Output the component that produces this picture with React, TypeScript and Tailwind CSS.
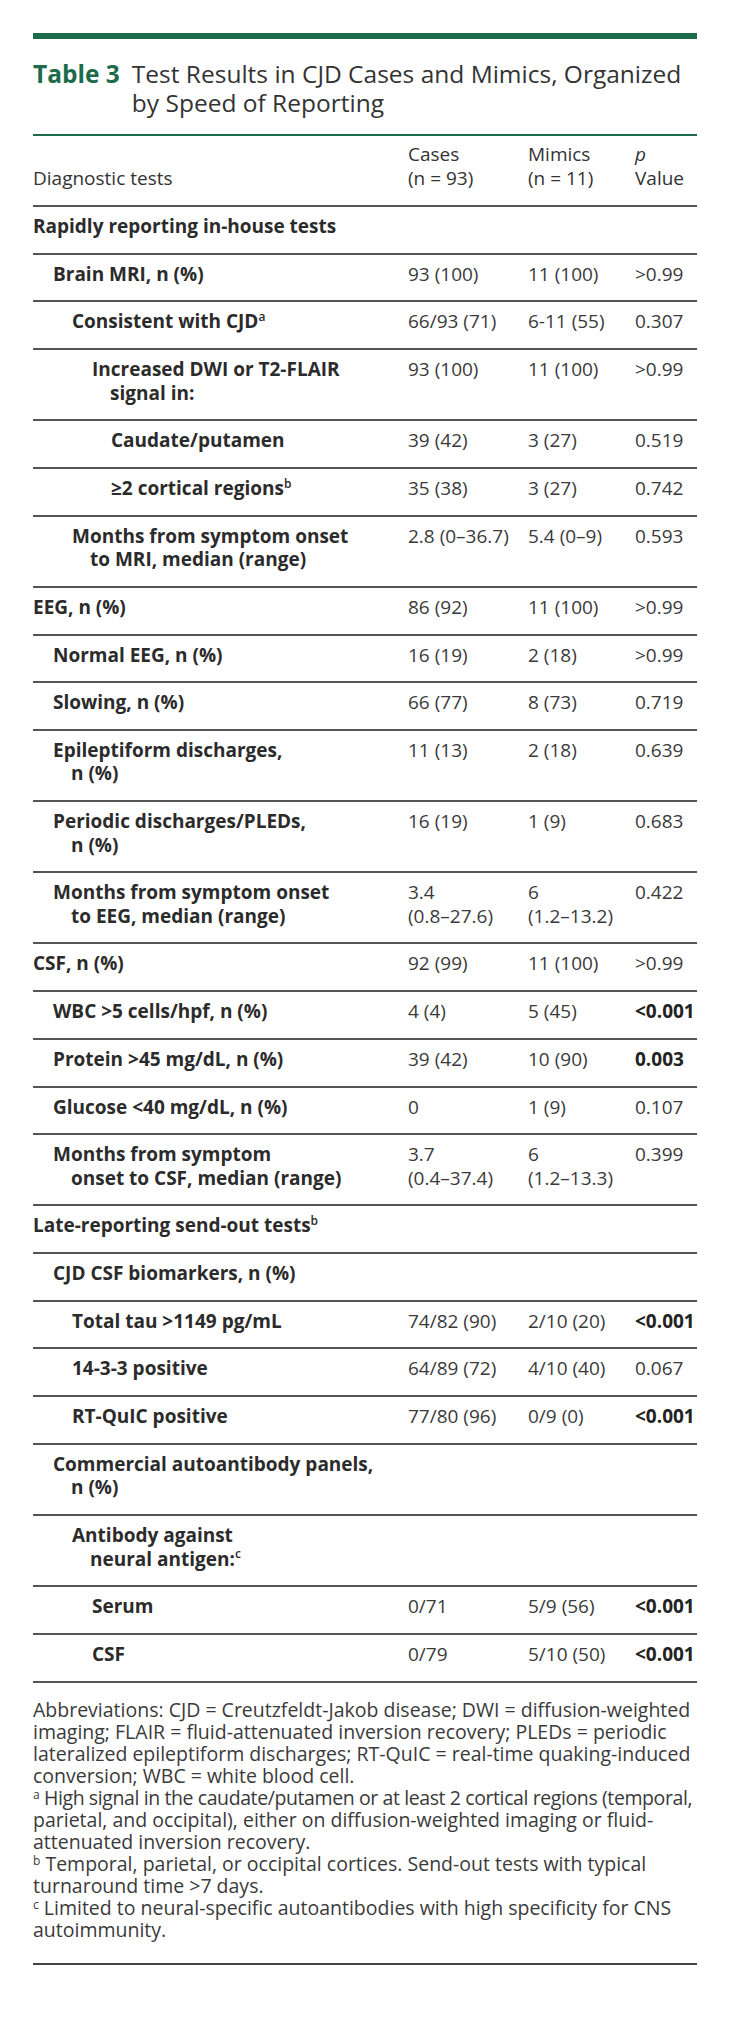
import React from "react";

type Row = {
  label: React.ReactNode[];
  level: number;
  cases?: string[];
  mimics?: string[];
  p?: string;
  bold?: boolean;
};

const sup = (t: string) => <sup className="text-[12px] font-semibold -top-[0.6em]">{t}</sup>;

const rows: Row[] = [
  { label: ["Rapidly reporting in-house tests"], level: 0 },
  { label: ["Brain MRI, n (%)"], level: 1, cases: ["93 (100)"], mimics: ["11 (100)"], p: ">0.99" },
  { label: [<>Consistent with CJD{sup("a")}</>], level: 2, cases: ["66/93 (71)"], mimics: ["6-11 (55)"], p: "0.307" },
  { label: ["Increased DWI or T2-FLAIR", "signal in:"], level: 3, cases: ["93 (100)"], mimics: ["11 (100)"], p: ">0.99" },
  { label: ["Caudate/putamen"], level: 4, cases: ["39 (42)"], mimics: ["3 (27)"], p: "0.519" },
  { label: [<>≥2 cortical regions{sup("b")}</>], level: 4, cases: ["35 (38)"], mimics: ["3 (27)"], p: "0.742" },
  { label: ["Months from symptom onset", "to MRI, median (range)"], level: 2, cases: ["2.8 (0–36.7)"], mimics: ["5.4 (0–9)"], p: "0.593" },
  { label: ["EEG, n (%)"], level: 0, cases: ["86 (92)"], mimics: ["11 (100)"], p: ">0.99" },
  { label: ["Normal EEG, n (%)"], level: 1, cases: ["16 (19)"], mimics: ["2 (18)"], p: ">0.99" },
  { label: ["Slowing, n (%)"], level: 1, cases: ["66 (77)"], mimics: ["8 (73)"], p: "0.719" },
  { label: ["Epileptiform discharges,", "n (%)"], level: 1, cases: ["11 (13)"], mimics: ["2 (18)"], p: "0.639" },
  { label: ["Periodic discharges/PLEDs,", "n (%)"], level: 1, cases: ["16 (19)"], mimics: ["1 (9)"], p: "0.683" },
  { label: ["Months from symptom onset", "to EEG, median (range)"], level: 1, cases: ["3.4", "(0.8–27.6)"], mimics: ["6", "(1.2–13.2)"], p: "0.422" },
  { label: ["CSF, n (%)"], level: 0, cases: ["92 (99)"], mimics: ["11 (100)"], p: ">0.99" },
  { label: ["WBC >5 cells/hpf, n (%)"], level: 1, cases: ["4 (4)"], mimics: ["5 (45)"], p: "<0.001", bold: true },
  { label: ["Protein >45 mg/dL, n (%)"], level: 1, cases: ["39 (42)"], mimics: ["10 (90)"], p: "0.003", bold: true },
  { label: ["Glucose <40 mg/dL, n (%)"], level: 1, cases: ["0"], mimics: ["1 (9)"], p: "0.107" },
  { label: ["Months from symptom", "onset to CSF, median (range)"], level: 1, cases: ["3.7", "(0.4–37.4)"], mimics: ["6", "(1.2–13.3)"], p: "0.399" },
  { label: [<>Late-reporting send-out tests{sup("b")}</>], level: 0 },
  { label: ["CJD CSF biomarkers, n (%)"], level: 1 },
  { label: ["Total tau >1149 pg/mL"], level: 2, cases: ["74/82 (90)"], mimics: ["2/10 (20)"], p: "<0.001", bold: true },
  { label: ["14-3-3 positive"], level: 2, cases: ["64/89 (72)"], mimics: ["4/10 (40)"], p: "0.067" },
  { label: ["RT-QuIC positive"], level: 2, cases: ["77/80 (96)"], mimics: ["0/9 (0)"], p: "<0.001", bold: true },
  { label: ["Commercial autoantibody panels,", "n (%)"], level: 1 },
  { label: ["Antibody against", <>neural antigen:{sup("c")}</>], level: 2 },
  { label: ["Serum"], level: 3, cases: ["0/71"], mimics: ["5/9 (56)"], p: "<0.001", bold: true },
  { label: ["CSF"], level: 3, cases: ["0/79"], mimics: ["5/10 (50)"], p: "<0.001", bold: true },
];

const indents = ["pl-0", "pl-[20px]", "pl-[39px]", "pl-[59px]", "pl-[78px]"];

const footnotes: React.ReactNode[] = [
  "Abbreviations: CJD = Creutzfeldt-Jakob disease; DWI = diffusion-weighted",
  "imaging; FLAIR = fluid-attenuated inversion recovery; PLEDs = periodic",
  "lateralized epileptiform discharges; RT-QuIC = real-time quaking-induced",
  "conversion; WBC = white blood cell.",
  <span className="tracking-[-0.4px]"><sup className="text-[12px]">a</sup> High signal in the caudate/putamen or at least 2 cortical regions (temporal,</span>,
  "parietal, and occipital), either on diffusion-weighted imaging or fluid-",
  "attenuated inversion recovery.",
  <><sup className="text-[12px]">b</sup> Temporal, parietal, or occipital cortices. Send-out tests with typical</>,
  "turnaround time >7 days.",
  <><sup className="text-[12px]">c</sup> Limited to neural-specific autoantibodies with high specificity for CNS</>,
  "autoimmunity.",
];

export default function App() {
  return (
    <div className="min-h-[2020px] bg-white px-[33px] pt-[33px] text-[#333] font-['Open_Sans',sans-serif]">
      <div className="h-[6px] bg-[#1c6b4b]" />

      <div className="mt-[20px] flex gap-[12px] text-[24.5px] leading-[29px]">
        <div className="font-bold text-[#1c6b4b] whitespace-nowrap">Table 3</div>
        <div className="text-[#333]">
          Test Results in CJD Cases and Mimics, Organized
          <br />
          by Speed of Reporting
        </div>
      </div>

      <div className="mt-[17px] h-[2px] bg-[#1c6b4b]" />

      <div className="grid grid-cols-[375px_120px_107px_62px] border-b-2 border-[#555] pt-[7px] pb-[15px] text-[19px] leading-[23.5px] text-[#333]">
        <div className="self-end">Diagnostic tests</div>
        <div>
          Cases
          <br />
          (n = 93)
        </div>
        <div>
          Mimics
          <br />
          (n = 11)
        </div>
        <div>
          <span className="italic">p</span>
          <br />
          Value
        </div>
      </div>

      {rows.map((r, i) => (
        <div
          key={i}
          className="grid grid-cols-[375px_120px_107px_62px] border-b-2 border-[#555] pt-[8px] pb-[14.2px] text-[19px] leading-[23.5px]"
        >
          <div className={`${indents[r.level]} font-bold text-[#2b2b2b]`}>
            {r.label.map((l, j) => (
              <div key={j} className={j > 0 ? "pl-[18px]" : ""}>
                {l}
              </div>
            ))}
          </div>
          <div className="whitespace-nowrap text-[#3a3a3a]">
            {r.cases?.map((c, j) => <div key={j}>{c}</div>)}
          </div>
          <div className="whitespace-nowrap text-[#3a3a3a]">
            {r.mimics?.map((c, j) => <div key={j}>{c}</div>)}
          </div>
          <div className={`whitespace-nowrap ${r.bold ? "font-bold text-[#222]" : "text-[#3a3a3a]"}`}>{r.p}</div>
        </div>
      ))}

      <div className="mt-[16px] text-[19.5px] leading-[22px] text-[#3a3a3a]">
        {footnotes.map((f, i) => (
          <div key={i} className="whitespace-nowrap">
            {f}
          </div>
        ))}
      </div>

      <div className="mt-[22px] h-[2px] bg-[#444]" />
    </div>
  );
}
